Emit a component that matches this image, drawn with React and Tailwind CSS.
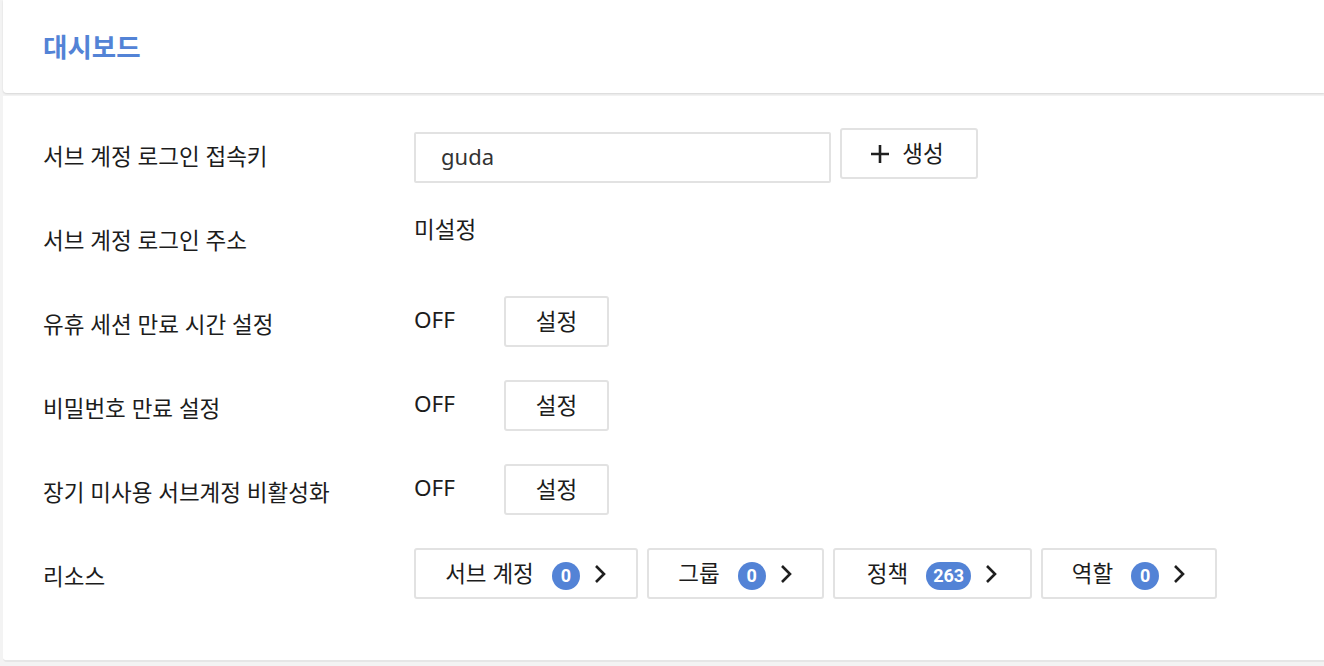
import React from 'react';

const Chevron = () => (
  <svg width="14" height="22" viewBox="0 0 14 22" className="shrink-0">
    <path d="M3 3l8 8-8 8" fill="none" stroke="#1f1f1f" strokeWidth="2.6" strokeLinecap="butt" strokeLinejoin="miter" />
  </svg>
);

const Plus = () => (
  <svg width="20" height="20" viewBox="0 0 20 20" className="shrink-0">
    <path d="M10 1v18M1 10h18" fill="none" stroke="#1f1f1f" strokeWidth="2.6" />
  </svg>
);

const Badge = ({ n }) => (
  <span
    className="inline-flex h-[28px] min-w-[28px] items-center justify-center rounded-full bg-[#5383d6] px-[7px] text-[18px] font-bold leading-none text-white"
    style={{ fontFamily: 'Roboto, sans-serif' }}
  >
    {n}
  </span>
);

const SetButton = () => (
  <button className="h-[51px] w-[105px] rounded-[3px] border-2 border-[#e2e2e2] bg-white text-[22.5px] text-[#1c1c1c]">
    설정
  </button>
);

const Row = ({ label, children }) => (
  <div className="flex h-[84px]">
    <div className="w-[371px] shrink-0 pt-[13px] text-[22.5px] leading-[32px] text-[#1c1c1c]">{label}</div>
    <div className="flex-1">{children}</div>
  </div>
);

const OffRow = () => (
  <div className="flex h-[51px] items-center">
    <span className="w-[90px] pb-[4px] text-[22.5px] text-[#1c1c1c]">OFF</span>
    <SetButton />
  </div>
);

const resources = [
  { name: '서브 계정', count: 0, w: 'w-[224px]' },
  { name: '그룹', count: 0, w: 'w-[177px]' },
  { name: '정책', count: 263, w: 'w-[199px]' },
  { name: '역할', count: 0, w: 'w-[176px]' },
];

export default function App() {
  return (
    <div
      className="min-h-[666px] bg-[#f3f3f3] pl-[3px]"
      style={{ fontFamily: '"Noto Sans", "Noto Sans CJK KR", sans-serif' }}
    >
      <div className="flex h-[93px] items-center rounded-bl-[4px] bg-white pl-[40px] shadow-[0_1px_2px_rgba(0,0,0,0.12)]">
        <h1 className="pt-[2px] text-[26.5px] font-bold text-[#5383d6]">대시보드</h1>
      </div>
      <div className="mt-[3px] h-[566px] rounded-bl-[4px] border-b-2 border-[#e6e6e6] bg-white pl-[40px] pt-[32px]">
        <Row label="서브 계정 로그인 접속키">
          <div className="flex items-start">
            <div className="mt-[4px] flex h-[51px] w-[417px] items-center rounded-[2px] border-2 border-[#e2e2e2] pb-[3px] pl-[25px] text-[22px] text-[#333]">
              guda
            </div>
            <button className="ml-[9px] flex h-[51px] w-[138px] items-center justify-center gap-[12px] rounded-[3px] border-2 border-[#e2e2e2] bg-white pr-[4px] text-[22.5px] text-[#1c1c1c]">
              <Plus />
              <span>생성</span>
            </button>
          </div>
        </Row>
        <Row label="서브 계정 로그인 주소">
          <div className="pt-[2px] text-[22.5px] leading-[32px] text-[#1c1c1c]">미설정</div>
        </Row>
        <Row label="유휴 세션 만료 시간 설정">
          <OffRow />
        </Row>
        <Row label="비밀번호 만료 설정">
          <OffRow />
        </Row>
        <Row label="장기 미사용 서브계정 비활성화">
          <OffRow />
        </Row>
        <Row label="리소스">
          <div className="flex gap-[9px]">
            {resources.map((r) => (
              <button
                key={r.name}
                className={`flex h-[51px] ${r.w} items-center justify-center rounded-[3px] border-2 border-[#e2e2e2] bg-white text-[22.5px] text-[#1c1c1c]`}
              >
                <span>{r.name}</span>
                <span className="ml-[18px]">
                  <Badge n={r.count} />
                </span>
                <span className="ml-[13px] flex items-center">
                  <Chevron />
                </span>
              </button>
            ))}
          </div>
        </Row>
      </div>
    </div>
  );
}
